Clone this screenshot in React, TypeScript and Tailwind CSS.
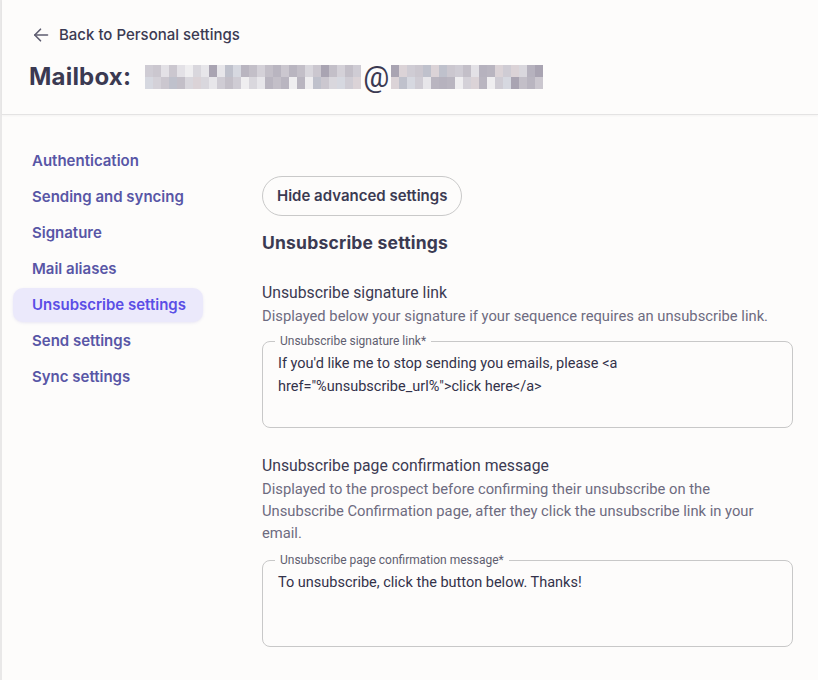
import React from "react";

const NAV = [
  "Authentication",
  "Sending and syncing",
  "Signature",
  "Mail aliases",
  "Unsubscribe settings",
  "Send settings",
  "Sync settings",
];

// pixelated (blurred) email address, shades picked from a small palette
const SHADES = ["#d9d7dd", "#c3bfc8", "#e3e1e6", "#b6b2be", "#d4d1d8", "#cbc7cf", "#a9a4b2", "#e7e6ea", "#bfc1cc", "#dbd3d7", "#cfccd4", "#efeef0", "#b9b5c0", "#d6d8e0"];

function shadeRow(count: number, seed: number) {
  const out: string[] = [];
  let s = seed;
  for (let i = 0; i < count; i++) {
    s = (s * 9301 + 49297) % 233280;
    out.push(SHADES[s % SHADES.length]);
  }
  return out;
}

function Mosaic({ count, seed }: { count: number; seed: number }) {
  const rows = [shadeRow(count, seed), shadeRow(count, seed + 17)];
  return (
    <div className="flex flex-col">
      {rows.map((row, r) => (
        <div key={r} className="flex">
          {row.map((c, i) => (
            <div key={i} className="w-[8px] h-[12px]" style={{ backgroundColor: c }} />
          ))}
        </div>
      ))}
    </div>
  );
}

function OutlinedField({ label, lines }: { label: string; lines: string[] }) {
  return (
    <fieldset className="border border-[#c8c8c8] rounded-[8px] px-[15px] pb-0 m-0">
      <legend className="px-[5px] ml-[-3px] text-[12px] leading-[16px] text-[#5f5e70]">
        {label}
      </legend>
      <div className="h-[78px] pt-[3px] text-[14.5px] leading-[23px] text-[#33324a]">
        {lines.map((l, i) => (
          <div key={i}>{l}</div>
        ))}
      </div>
    </fieldset>
  );
}

export default function App() {
  return (
    <div className="min-h-[680px] bg-[#fdfcfb] border-l-2 border-[#e9e8e8] font-['Roboto',sans-serif] text-[#3b3a52]">
      <header className="border-b border-[#e4e3e3] shadow-[0_1px_2px_rgba(0,0,0,0.04)] pl-[27px] pt-[24px] h-[115px]">
        <a className="flex items-center gap-[10px] text-[15px] font-medium font-['Inter',sans-serif] text-[#3b3a52] w-fit pl-[4px]">
          <svg width="16" height="16" viewBox="0 0 16 16" fill="none" stroke="#5d5c70" strokeWidth="1.6" strokeLinecap="round" strokeLinejoin="round">
            <path d="M14.5 8H1.8" />
            <path d="M7.5 2.2L1.8 8l5.7 5.8" />
          </svg>
          <span className="leading-[22px]">Back to Personal settings</span>
        </a>
        <div className="flex items-center mt-[16px] h-[30px]">
          <h1 className="text-[24px] font-bold font-['Inter',sans-serif] tracking-[0.2px] text-[#3b3a52] mr-[14px]">
            Mailbox:
          </h1>
          <Mosaic count={27} seed={7} />
          <span className="text-[29px] text-[#3b3a52] mx-[2px] leading-[30px] font-['Roboto',sans-serif]">@</span>
          <Mosaic count={19} seed={31} />
        </div>
      </header>

      <div className="flex">
        <nav className="w-[260px] shrink-0 pl-[11px] pt-[29px]">
          <ul className="flex flex-col gap-[2px] w-[190px]">
            {NAV.map((n) => {
              const active = n === "Unsubscribe settings";
              return (
                <li
                  key={n}
                  className={`h-[34px] flex items-center pl-[19px] rounded-[10px] text-[15px] font-semibold font-['Inter',sans-serif] ${
                    active
                      ? "bg-[#ebe9fb] text-[#5a4ee6] shadow-[0_1px_3px_rgba(90,80,200,0.12)]"
                      : "text-[#5856a6]"
                  }`}
                >
                  {n}
                </li>
              );
            })}
          </ul>
        </nav>

        <main className="w-[531px] pt-[61px]">
          <button className="h-[40px] px-[14px] rounded-full border border-[#c9c9c9] text-[15px] font-semibold font-['Inter',sans-serif] text-[#3b3a52] bg-transparent">
            Hide advanced settings
          </button>
          <h2 className="mt-[15px] text-[17.5px] leading-[24px] font-bold font-['Inter',sans-serif] tracking-[0.2px] text-[#3b3a52]">
            Unsubscribe settings
          </h2>

          <section className="mt-[26px]">
            <div className="text-[15.75px] leading-[24px] text-[#3b3a52]">Unsubscribe signature link</div>
            <p className="text-[14.75px] leading-[22px] text-[#6d6b80]">
              Displayed below your signature if your sequence requires an unsubscribe link.
            </p>
            <div className="mt-[6px]">
              <OutlinedField
                label="Unsubscribe signature link*"
                lines={[
                  "If you'd like me to stop sending you emails, please <a",
                  'href="%unsubscribe_url%">click here</a>',
                ]}
              />
            </div>
          </section>

          <section className="mt-[26px]">
            <div className="text-[15.75px] leading-[24px] text-[#3b3a52]">Unsubscribe page confirmation message</div>
            <p className="text-[14.75px] leading-[22px] text-[#6d6b80]">
              Displayed to the prospect before confirming their unsubscribe on the Unsubscribe Confirmation page, after they click the unsubscribe link in your email.
            </p>
            <div className="mt-[8px]">
              <OutlinedField
                label="Unsubscribe page confirmation message*"
                lines={["To unsubscribe, click the button below. Thanks!"]}
              />
            </div>
          </section>
        </main>
      </div>
    </div>
  );
}
